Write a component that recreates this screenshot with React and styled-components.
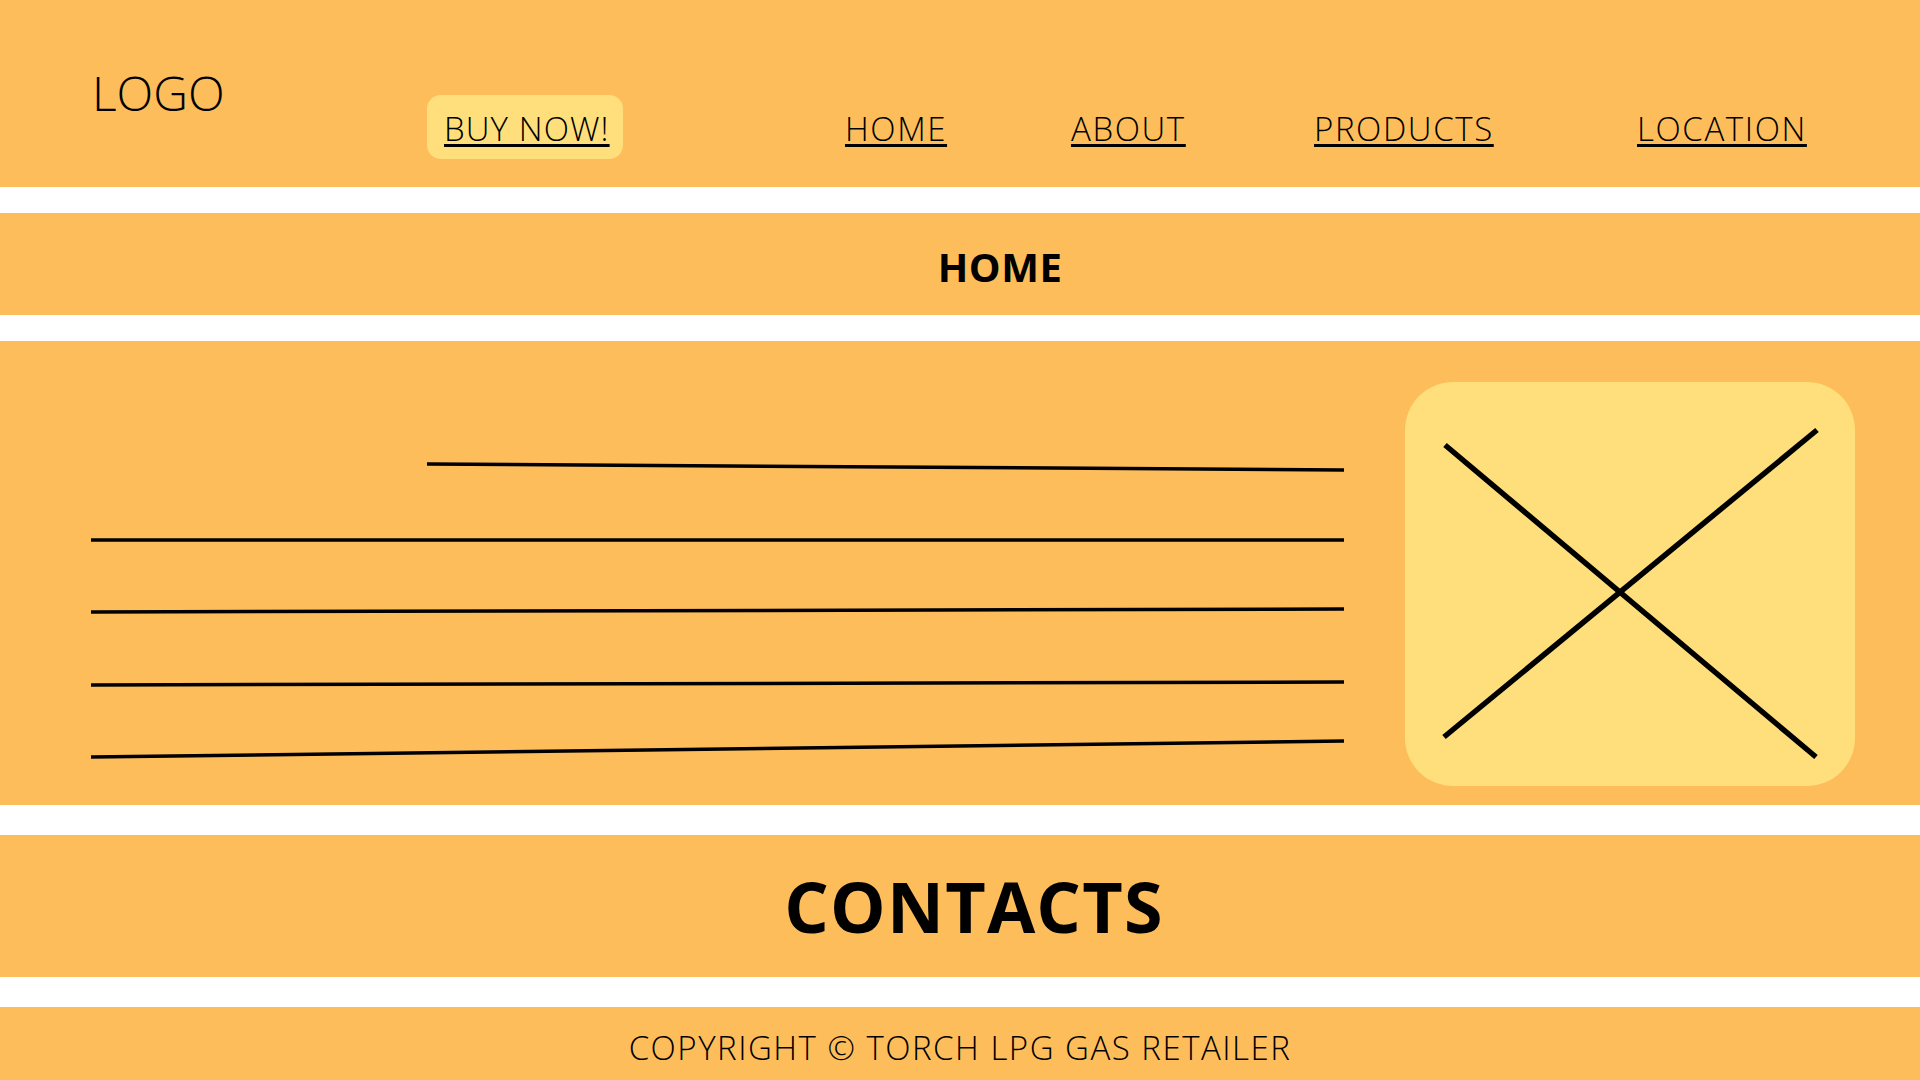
import React from 'react'
import styled, { createGlobalStyle } from 'styled-components'

const ORANGE = '#febd5b'
const YELLOW = '#ffdf7b'

const GlobalStyle = createGlobalStyle`
  html, body {
    margin: 0;
    padding: 0;
    background: #ffffff;
  }

  body {
    font-family: 'Open Sans', 'Liberation Sans', sans-serif;
    color: #000000;
    overflow: hidden;
  }
`

const Page = styled.div`
  width: 1920px;
  height: 1080px;
  display: flex;
  flex-direction: column;
`

const Band = styled.section`
  flex: none;
  height: ${(p) => p.$height}px;
  margin-top: ${(p) => p.$gap || 0}px;
  background: ${ORANGE};
  box-sizing: border-box;
`

const Header = styled(Band)`
  display: grid;
  grid-template-columns: 335px 418px 226px 243px 323px 1fr;
  align-items: start;
  padding-left: 92px;
`

const Logo = styled.div`
  margin-top: 69px;
  font-size: 48px;
  font-weight: 340;
  line-height: 1;
`

const NavLink = styled.a`
  justify-self: start;
  margin-top: 112px;
  font-size: 33px;
  font-weight: 350;
  letter-spacing: 1.6px;
  line-height: 1;
  color: #000000;
  text-decoration: underline;
  text-decoration-thickness: 3px;
  text-underline-offset: 3px;
`

const BuyButton = styled(NavLink)`
  margin-top: 95px;
  padding: 17px 13px 14px 17px;
  border-radius: 14px;
  letter-spacing: 1.1px;
  background: ${YELLOW};
`

const TitleBar = styled(Band)`
  padding-top: ${(p) => p.$top}px;
  padding-left: ${(p) => p.$shift}px;
  text-align: center;
`

const Title = styled.h2`
  margin: 0;
  font-size: ${(p) => p.$size}px;
  font-weight: 700;
  letter-spacing: ${(p) => p.$spacing}px;
  line-height: 1;
`

const Main = styled(Band)`
  display: flex;
  align-items: flex-start;
  padding: 41px 0 0 88px;
`

const Sketch = styled.svg`
  flex: none;
  margin-top: 78px;
  display: block;
`

const ImageBox = styled.div`
  flex: none;
  width: 450px;
  height: 404px;
  margin-left: 57px;
  border-radius: 48px;
  background: ${YELLOW};

  svg {
    display: block;
  }
`

const Footer = styled(Band)`
  padding-top: 24px;
  text-align: center;
  font-size: 33px;
  font-weight: 350;
  letter-spacing: 1.5px;
  line-height: 1;
`

const lines = [
  [339, 4, 1256, 10],
  [3, 80, 1256, 80],
  [3, 152, 1256, 149],
  [3, 225, 1256, 222],
  [3, 297, 1256, 281],
]

const navItems = ['HOME', 'ABOUT', 'PRODUCTS', 'LOCATION']

const App = () => (
  <>
    <GlobalStyle />
    <Page>
      <Header as='header' $height={187}>
        <Logo>LOGO</Logo>
        <BuyButton href='#buy'>BUY NOW!</BuyButton>
        {navItems.map((item) => (
          <NavLink key={item} href={`#${item.toLowerCase()}`}>
            {item}
          </NavLink>
        ))}
      </Header>

      <TitleBar $height={102} $gap={26} $top={34} $shift={80}>
        <Title $size={40} $spacing={0.5}>HOME</Title>
      </TitleBar>

      <Main $height={464} $gap={26}>
        <Sketch width='1260' height='300' viewBox='0 0 1260 300'>
          {lines.map(([x1, y1, x2, y2], i) => (
            <line key={i} x1={x1} y1={y1} x2={x2} y2={y2} stroke='#000' strokeWidth='3.5' />
          ))}
        </Sketch>
        <ImageBox>
          <svg width='450' height='404' viewBox='0 0 450 404'>
            <line x1='40' y1='63' x2='411' y2='375' stroke='#000' strokeWidth='5.5' />
            <line x1='412' y1='48' x2='39' y2='355' stroke='#000' strokeWidth='5.5' />
          </svg>
        </ImageBox>
      </Main>

      <TitleBar $height={142} $gap={30} $top={36} $shift={28}>
        <Title $size={70} $spacing={1.2}>CONTACTS</Title>
      </TitleBar>

      <Footer as='footer' $height={73} $gap={30}>
        COPYRIGHT © TORCH LPG GAS RETAILER
      </Footer>
    </Page>
  </>
)

export default App
